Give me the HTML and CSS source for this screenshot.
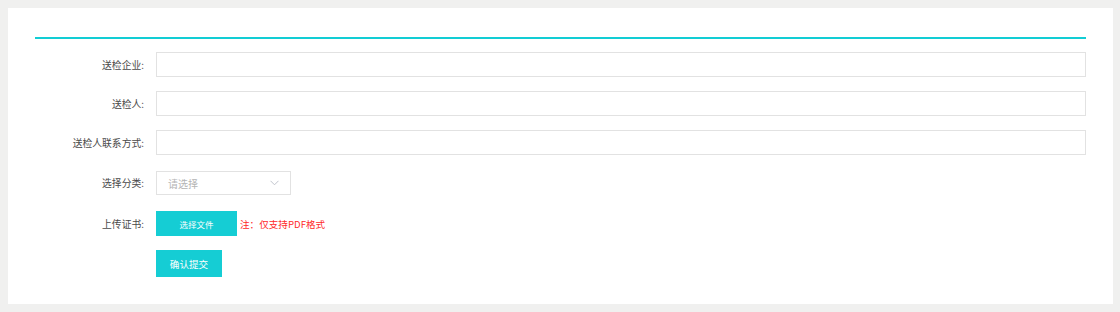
FILE: index.html
```html
<!DOCTYPE html>
<html lang="zh">
<head>
<meta charset="utf-8">
<title>送检</title>
<link rel="stylesheet" href="styles.css">
</head>
<body>
<div class="card">
  <div class="rule"></div>
  <form class="form">
    <div class="row row-a">
      <label class="label">送检企业:</label>
      <input class="input" type="text">
    </div>
    <div class="row row-a">
      <label class="label">送检人:</label>
      <input class="input" type="text">
    </div>
    <div class="row row-b">
      <label class="label">送检人联系方式:</label>
      <input class="input" type="text">
    </div>
    <div class="row row-b">
      <label class="label">选择分类:</label>
      <div class="select">
        <span class="placeholder">请选择</span>
        <svg class="chev" width="9" height="6" viewBox="0 0 9 6"><path d="M0.5 0.8 L4.5 4.8 L8.5 0.8" fill="none" stroke="#c0c4cc" stroke-width="1"/></svg>
      </div>
    </div>
    <div class="row row-c">
      <label class="label">上传证书:</label>
      <button type="button" class="btn btn-file">选择文件</button>
      <span class="note">注：仅支持PDF格式</span>
    </div>
    <div class="row">
      <span class="label"></span>
      <button type="button" class="btn btn-submit">确认提交</button>
    </div>
  </form>
</div>
</body>
</html>
```
FILE: styles.css
```css
html, body {
  margin: 0;
  padding: 0;
  background: #f0f0ef;
}
body {
  padding: 8px 7px 8px 8px;
  font-family: "Noto Sans CJK SC", "Noto Sans", sans-serif;
  color: #444;
}
.card {
  background: #fff;
  padding: 29px 27px 27px 27px;
}
.rule {
  height: 2px;
  background: #12cdd4;
}
.form {
  margin-top: 13px;
  display: flex;
  flex-direction: column;
}
.row {
  display: flex;
  align-items: center;
}
.row-a { margin-bottom: 14px; }
.row-b { margin-bottom: 16px; }
.row-c { margin-bottom: 14px; }
.label {
  width: 109px;
  padding-right: 12px;
  flex: none;
  text-align: right;
  font-size: 9.8px;
  color: #4a4a4a;
}
.input {
  flex: 1;
  height: 25px;
  box-sizing: border-box;
  border: 1px solid #e2e2e2;
  margin: 0;
  padding: 0 8px;
  outline: none;
  background: #fff;
}
.select {
  width: 135px;
  height: 24px;
  box-sizing: border-box;
  border: 1px solid #e2e2e2;
  display: flex;
  align-items: center;
  justify-content: space-between;
  padding: 0 11px 0 11px;
}
.placeholder {
  font-size: 10px;
  color: #b4b4b4;
}
.chev { display: block; }
.btn {
  border: none;
  margin: 0;
  padding: 0;
  background: #15cdd4;
  color: #fff;
  font-family: "Noto Sans CJK SC", "Noto Sans", sans-serif;
}
.btn-file {
  width: 81px;
  height: 25px;
  font-size: 8.5px;
}
.note {
  margin-left: 3px;
  font-size: 9.6px;
  color: #ff2a2a;
}
.btn-submit {
  width: 66px;
  height: 27px;
  font-size: 9.6px;
}
```
